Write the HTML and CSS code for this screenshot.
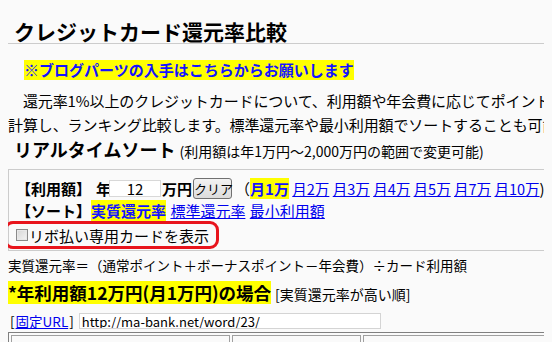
FILE: index.html
```html
<!DOCTYPE html>
<html lang="ja">
<head>
<meta charset="utf-8">
<title>クレジットカード還元率比較</title>
<link rel="stylesheet" href="styles.css">
</head>
<body>
<div class="page">
  <h1 class="title">クレジットカード還元率比較</h1>
  <p class="notice"><a class="notice-link" href="#">※ブログパーツの入手はこちらからお願いします</a></p>
  <p class="intro">　還元率1%以上のクレジットカードについて、利用額や年会費に応じてポイント<br>計算し、ランキング比較します。標準還元率や最小利用額でソートすることも可能です。</p>
  <h2 class="sort-title">リアルタイムソート <span class="sort-note">(利用額は年1万円～2,000万円の範囲で変更可能)</span></h2>
  <div class="sortbox">
    <div class="row row-amount">
      <b>【利用額】</b>
      <b class="year">年</b>
      <input class="amount" type="text" value="12">
      <b>万円</b>
      <button class="clear" type="button">クリア</button>
      <span class="months">（<b class="hl cur">月1万</b> <a href="#">月2万</a> <a href="#">月3万</a> <a href="#">月4万</a> <a href="#">月5万</a> <a href="#">月7万</a> <a href="#">月10万</a>)</span>
    </div>
    <div class="row row-sort">
      <b>【ソート】</b>
      <span class="sorts"><b class="hl cur">実質還元率</b> <a href="#">標準還元率</a> <a href="#">最小利用額</a></span>
    </div>
    <label class="revo"><input class="check" type="checkbox">リボ払い専用カードを表示</label>
  </div>
  <p class="formula">実質還元率＝（通常ポイント＋ボーナスポイント－年会費）÷カード利用額</p>
  <div class="case"><span class="case-title">*年利用額12万円(月1万円)の場合</span><span class="case-order">[実質還元率が高い順]</span></div>
  <div class="url">[<a href="#">固定URL</a>] <input class="url-input" type="text" value="http://ma-bank.net/word/23/"></div>
  <table class="ranking">
    <tr>
      <th class="c1"><a href="#">順位</a>　<a href="#">カード名</a></th>
      <th class="c2"><a href="#">実質還元率</a></th>
      <th class="c3"><a href="#">標準還元率</a></th>
    </tr>
  </table>
</div>
</body>
</html>
```
FILE: styles.css
```css
html {
  overflow: hidden;
}
body {
  margin: 8px;
  background: #fafafa;
  color: #000;
  font-family: "Noto Sans CJK JP", "Noto Sans", sans-serif;
  font-size: 15px;
}
a {
  color: #0000ee;
}
.page {
  width: 640px;
}
.title {
  margin: 11px 0 0;
  padding-left: 6px;
  font-size: 21px;
  line-height: 24px;
  font-weight: bold;
  border-bottom: 1px solid #cccccc;
}
.notice {
  display: flex;
  margin: 16px 0 0 16px;
  height: 20px;
}
.notice-link {
  display: block;
  line-height: 20px;
  background: #ffff00;
  color: #1414ff;
  font-weight: bold;
  text-decoration: none;
}
.intro {
  margin: 9px 0 0;
  line-height: 24px;
  white-space: nowrap;
  letter-spacing: -0.1px;
}
.sort-title {
  margin: 0;
  padding-left: 6px;
  font-size: 18px;
  line-height: 24px;
  font-weight: bold;
}
.sort-note {
  font-size: 14px;
  font-weight: normal;
}
.sortbox {
  margin-top: 6px;
  border-top: 1px solid #cccccc;
  border-left: 1px solid #cccccc;
  border-bottom: 1px solid #cccccc;
  padding: 6px 0 1px 7px;
}
.row {
  display: flex;
  align-items: center;
  white-space: nowrap;
}
.row-amount {
  height: 24px;
}
.row-sort {
  height: 21px;
}
.year {
  margin-left: 5px;
}
.amount {
  width: 52px;
  height: 17px;
  box-sizing: border-box;
  margin: 0 1px 0 -2px;
  padding: 0;
  border: 1px solid #d8d8d8;
  background: #fff;
  font-family: inherit;
  font-size: 15px;
  text-align: center;
  color: #000;
}
.clear {
  width: 39px;
  height: 21px;
  margin: 0 0 0 1px;
  padding: 0;
  border: 1px solid #707070;
  border-radius: 3px;
  background: linear-gradient(#f2f2f2, #dcdcdc);
  font-family: inherit;
  font-size: 13px;
  color: #000;
}
.months {
  margin-left: 3px;
}
.months a {
  font-size: 14.5px;
}
.sorts a {
  margin-left: 1px;
}
.hl {
  background: #ffff00;
}
.cur {
  color: #1414ff;
  font-weight: bold;
}
.sorts {
  margin-left: 0;
}
.revo {
  display: inline-flex;
  align-items: center;
  width: 215px;
  height: 28px;
  box-sizing: border-box;
  margin: 0 0 0 -12px;
  padding-left: 9px;
  border: 3px solid #e8141c;
  border-radius: 9px;
  white-space: nowrap;
}
.check {
  appearance: none;
  width: 12px;
  height: 12px;
  margin: 0 1px 0 0;
  border: 1px solid #8a8a8a;
  background: linear-gradient(135deg, #d6d6d6, #f4f4f4);
  box-shadow: inset 0 0 0 1px #e8e8e8;
}
.formula {
  margin: 3px 0 0;
  font-size: 13.5px;
  line-height: 22px;
  white-space: nowrap;
}
.case {
  display: flex;
  align-items: baseline;
  margin-top: 5px;
  white-space: nowrap;
}
.case-title {
  display: block;
  line-height: 23px;
  background: #ffff00;
  font-size: 17.5px;
  font-weight: bold;
}
.case-order {
  margin-left: 4px;
  font-size: 14px;
}
.url {
  display: flex;
  align-items: center;
  height: 18px;
  margin-top: 8px;
  padding-left: 2px;
  font-size: 13.5px;
  white-space: nowrap;
}
.url a {
  margin: 0 1px;
}
.url-input {
  width: 302px;
  height: 16px;
  box-sizing: border-box;
  margin-left: 5px;
  padding: 0 2px;
  border: 1px solid #d4d4d4;
  background: #fff;
  font-family: inherit;
  font-size: 13px;
  color: #000;
}
.ranking {
  margin-top: 2px;
  width: 620px;
  border: 1px solid #808080;
  border-spacing: 2px;
}
.ranking th {
  border: 1px solid #a0a0a0;
  padding: 2px 6px;
  text-align: left;
  font-size: 15px;
  font-weight: bold;
}
.ranking .c1 {
  width: 205px;
}
.ranking .c2 {
  width: 115px;
}
```
